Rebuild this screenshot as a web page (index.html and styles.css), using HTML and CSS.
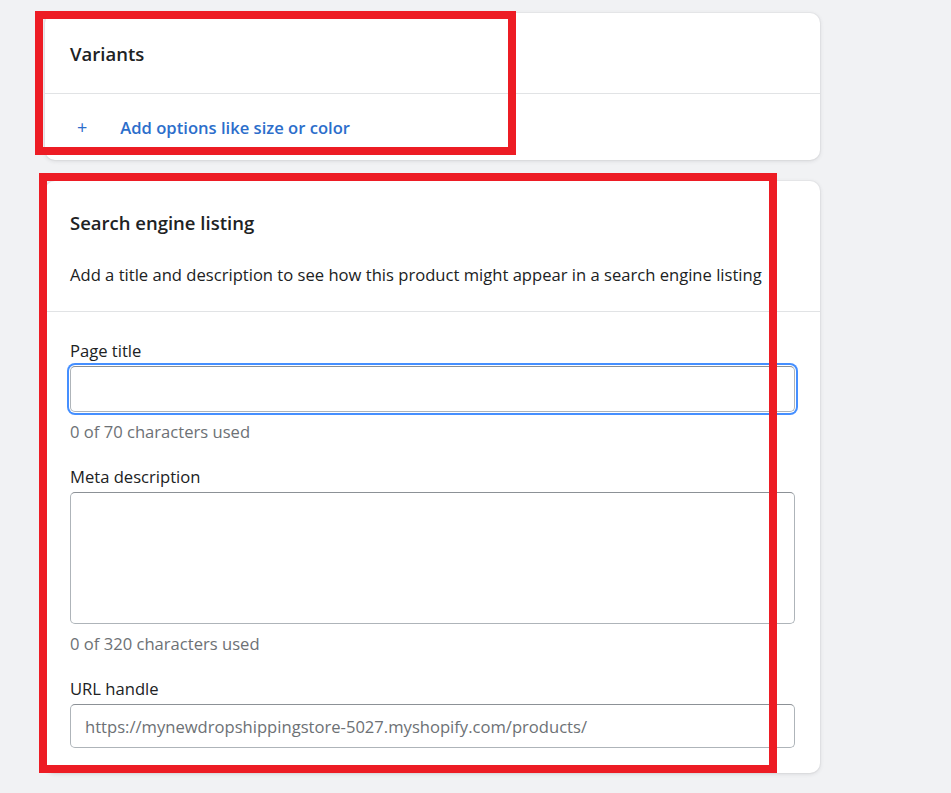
FILE: index.html
```html
<!DOCTYPE html>
<html lang="en">
<head>
    <meta charset="UTF-8">
    <title>Product - SEO</title>
    <link rel="stylesheet" href="styles.css">
</head>
<body>
    <div class="page">
        <div class="card">
            <div class="card-header">
                <h2>Variants</h2>
            </div>
            <div class="card-section add-row">
                <span class="plus">+</span>
                <a href="#" class="link">Add options like size or color</a>
            </div>
        </div>

        <div class="card">
            <div class="card-header seo-head">
                <h2>Search engine listing</h2>
                <p>Add a title and description to see how this product might appear in a search engine listing</p>
            </div>
            <div class="card-section fields">
                <div class="field">
                    <label for="page-title">Page title</label>
                    <input id="page-title" class="text-input focused" type="text">
                    <div class="help">0 of 70 characters used</div>
                </div>
                <div class="field">
                    <label for="meta-desc">Meta description</label>
                    <textarea id="meta-desc" class="text-input area"></textarea>
                    <div class="help">0 of 320 characters used</div>
                </div>
                <div class="field">
                    <label for="url-handle">URL handle</label>
                    <input id="url-handle" class="text-input" type="text" placeholder="https://mynewdropshippingstore-5027.myshopify.com/products/">
                </div>
            </div>
        </div>

        <!-- annotation boxes -->
        <div class="mark mark-variants"></div>
        <div class="mark mark-seo"></div>
    </div>
</body>
</html>
```

FILE: styles.css
```css
:root{
    --text: #202223;
    --subdued: #6d7175;
    --link: #2c6ecb;
    --divider: #e1e3e5;
    --mark: #ed1c24;
}
body {
    margin: 0;
    background: #f1f2f4;
    font-family: "Open Sans", Arial, sans-serif;
    font-size: 16.6px;
    line-height: 25px;
    color: var(--text);
}
.page {
    position: relative;
    display: flex;
    flex-direction: column;
    gap: 21px;
    width: 775px;
    padding: 13px 0 18px 45px;
}
.card {
    background: #fff;
    border-radius: 10px;
    box-shadow: 0 0 0 1px rgba(63, 63, 68, 0.03), 0 1px 4px rgba(63, 63, 68, 0.15);
}
.card-header {
    padding: 28px 25px 27px;
    border-bottom: 1px solid var(--divider);
}
.card-header h2 {
    margin: 0;
    font-size: 18.5px;
    font-weight: 600;
    line-height: 25px;
}
.card-section {
    padding: 21px 25px 20px;
}
.add-row {
    display: flex;
    gap: 33px;
    padding-left: 32px;
}
.plus {
    color: var(--link);
    font-size: 18px;
}
.link {
    color: var(--link);
    font-weight: 600;
    text-decoration: none;
}
.seo-head {
    padding: 29px 25px 24px;
}
.seo-head p {
    margin: 27px 0 0;
}
.fields {
    display: flex;
    flex-direction: column;
    gap: 20px;
    padding: 26px 25px 25px;
}
.field label {
    display: block;
    margin-bottom: 3px;
}
.text-input {
    display: block;
    box-sizing: border-box;
    width: 100%;
    height: 44px;
    margin: 0;
    padding: 0 14px;
    font: inherit;
    color: var(--text);
    background: #fff;
    border: 1px solid #aeb4b9;
    border-top-color: #8c9196;
    border-radius: 5px;
    outline: none;
}
.text-input::placeholder {
    color: var(--subdued);
}
.focused {
    height: 46px;
    box-shadow: 0 0 0 1px #fff, 0 0 0 3px #458fff;
}
.area {
    height: 132px;
    resize: none;
}
.help {
    margin-top: 7px;
    color: var(--subdued);
}
.mark {
    position: absolute;
    border: 8px solid var(--mark);
    box-sizing: border-box;
}
.mark-variants {
    left: 35px;
    top: 11px;
    width: 481px;
    height: 144px;
}
.mark-seo {
    left: 39px;
    top: 173px;
    width: 738px;
    height: 600px;
}
```
